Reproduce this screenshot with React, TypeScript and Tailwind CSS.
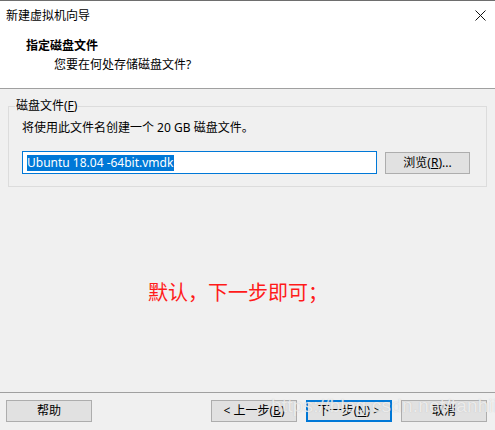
import React from "react"

const font = { fontFamily: '"Segoe UI", "Noto Sans", "Noto Sans CJK SC", sans-serif' }

function Btn({ children, primary = false, className = "" }: { children: React.ReactNode; primary?: boolean; className?: string }) {
  return (
    <div
      className={`h-[22px] flex items-center justify-center text-[12px] text-black bg-[#e1e1e1] ${
        primary ? "border-2 border-[#0078d7]" : "border border-[#adadad]"
      } ${className}`}
    >
      {children}
    </div>
  )
}

export default function App() {
  return (
    <div className="relative w-[495px] h-[430px] bg-[#f0f0f0] flex flex-col overflow-hidden" style={font}>
      {/* header */}
      <div className="bg-white border-t border-[#6e6e6e] border-b border-b-[#a0a0a0] h-[89px] flex flex-col">
        <div className="h-[29px] flex items-center justify-between pl-[6px] pr-[9px]">
          <span className="text-[12px] text-black leading-none">新建虚拟机向导</span>
          <svg width="11" height="11" viewBox="0 0 11 11">
            <path d="M0.5 0.5 L10.5 10.5 M10.5 0.5 L0.5 10.5" stroke="#111" strokeWidth="1" />
          </svg>
        </div>
        <div className="pl-[26px] pt-[9px] text-[12px] font-bold text-black leading-[14px]">指定磁盘文件</div>
        <div className="pl-[54px] pt-[5px] text-[12px] text-black leading-[14px]">您要在何处存储磁盘文件?</div>
      </div>

      {/* group box */}
      <div className="mx-[8px] mt-[17px] h-[81px] border border-[#dcdcdc] relative">
        <span className="absolute -top-[9px] left-[6px] bg-[#f0f0f0] px-[1px] text-[12px] text-black leading-[16px]">
          磁盘文件(<span className="underline">F</span>)
        </span>
        <div className="pl-[13px] pt-[13px] text-[12px] text-black leading-[16px]">将使用此文件名创建一个 20 GB 磁盘文件。</div>
        <div className="flex items-center pl-[13px] pt-[15px] gap-[8px]">
          <div className="w-[355px] h-[23px] bg-white border border-[#0078d7] flex items-center pl-[4px]">
            <span className="bg-[#0078d7] text-white text-[12px] leading-[16px] pr-[1px]">Ubuntu 18.04 -64bit.vmdk</span>
          </div>
          <Btn className="w-[85px]">
            浏览(<span className="underline">R</span>)...
          </Btn>
        </div>
      </div>

      {/* note */}
      <div className="flex-1 flex items-center pt-[4px] pl-[148px]">
        <span className="text-[20px] text-[#ff1a1a]" style={{ fontFamily: '"Noto Sans CJK SC", sans-serif' }}>
          默认，下一步即可；
        </span>
      </div>

      {/* footer */}
      <div className="border-t border-[#a0a0a0] h-[38px] flex items-center pl-[6px] pr-[8px] pb-[1px]">
        <Btn className="w-[86px]">帮助</Btn>
        <div className="flex-1" />
        <Btn className="w-[86px]">
          &lt; 上一步(<span className="underline">B</span>)
        </Btn>
        <Btn primary className="w-[86px] ml-[9px]">
          下一步(<span className="underline">N</span>) &gt;
        </Btn>
        <Btn className="w-[86px] ml-[9px]">取消</Btn>
      </div>

      {/* watermark */}
      <div
        className="absolute left-[271px] top-[392px] text-[19px] text-white/70 pointer-events-none tracking-[0.2px]"
        style={{ fontFamily: '"Liberation Sans", sans-serif', textShadow: "0 0 1px rgba(150,150,150,0.5)" }}
      >
        https://blog.csdn.net/tanhiilong
      </div>
    </div>
  )
}
